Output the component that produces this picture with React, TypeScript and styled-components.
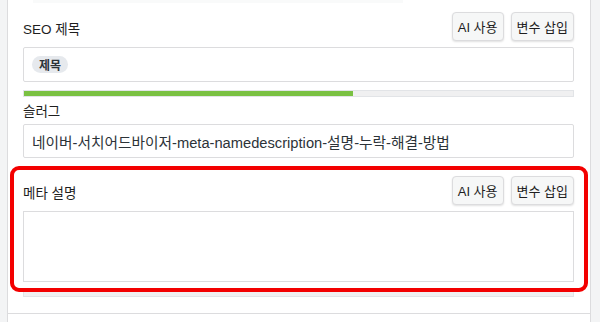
import { createGlobalStyle, styled } from "styled-components";

const GlobalStyle = createGlobalStyle`
  html, body {
    margin: 0;
    padding: 0;
    background: #f3f4f5;
    font-family: "Liberation Sans", "Noto Sans CJK KR", sans-serif;
    color: #1e1e1e;
  }
`;

const Page = styled.div`
  display: flex;
  height: 322px;
  padding-left: 7px;
  width: 584px;
  overflow: hidden;
`;

const Panel = styled.div`
  flex: 1;
  background: #fff;
  border-left: 1px solid #dcdcde;
  border-right: 1px solid #dcdcde;
  display: flex;
  flex-direction: column;
`;

const TopFade = styled.div`
  height: 3px;
  margin-left: 25px;
  width: 370px;
  background: #f9fafa;
`;

const Content = styled.div`
  padding: 9px 16px 0 15px;
  display: flex;
  flex-direction: column;
`;

const FieldHead = styled.div`
  display: flex;
  align-items: center;
  justify-content: space-between;
  height: 29px;
`;

const Label = styled.label<{ $pad?: string }>`
  font-size: 13.5px;
  line-height: 20px;
  color: #1e1e1e;
  padding: ${(p) => p.$pad ?? "0"};
`;

const Buttons = styled.div`
  display: flex;
  gap: 7px;
`;

const Button = styled.button`
  height: 29px;
  padding: 0 5px;
  font-family: inherit;
  font-size: 13px;
  color: #1e1e1e;
  background: #f6f7f7;
  border: 1px solid #dcdcde;
  border-radius: 4px;
  box-shadow: 0 1px 2px rgba(0, 0, 0, 0.12);
`;

const InputBox = styled.div<{ $h: number; $mt?: number }>`
  height: ${(p) => p.$h}px;
  margin-top: ${(p) => p.$mt ?? 6}px;
  border: 1px solid #dcdcde;
  border-radius: 2px;
  box-sizing: border-box;
  display: flex;
  align-items: center;
  padding: 0 8px;
  font-size: 14.7px;
  color: #2c3338;
  background: #fff;
  white-space: nowrap;
`;

const Chip = styled.span`
  display: inline-flex;
  align-items: center;
  height: 17px;
  padding: 0 7px;
  border-radius: 9px;
  background: #e6e9ed;
  font-size: 12px;
  font-weight: 600;
  color: #2c3338;
`;

const Progress = styled.div<{ $mt: number }>`
  height: 7px;
  margin-top: ${(p) => p.$mt}px;
  border: 1px solid #e2e4e7;
  box-sizing: border-box;
  background: #f0f0f1;
  overflow: hidden;
`;

const ProgressFill = styled.div`
  height: 100%;
  background: #7ac142;
`;

const Highlighted = styled.div`
  position: relative;
  margin-top: 8px;
  padding-top: 10px;
`;

const RedOutline = styled.div`
  position: absolute;
  top: 0;
  left: -13px;
  right: -14px;
  height: 126px;
  box-sizing: border-box;
  border: 4px solid #f30000;
  border-radius: 9px;
  pointer-events: none;
`;

const TextArea = styled.div`
  height: 71px;
  margin-top: 6px;
  border: 1px solid #dcdcde;
  box-sizing: border-box;
  background: #fff;
`;

const Separator = styled.div`
  margin-top: 16px;
  height: 1px;
  background: #dcdcde;
`;

export default function App() {
  return (
    <>
      <GlobalStyle />
      <Page>
        <Panel>
          <TopFade />
          <Content>
            <FieldHead>
              <Label $pad="6px 0 0">SEO 제목</Label>
              <Buttons>
                <Button>AI 사용</Button>
                <Button>변수 삽입</Button>
              </Buttons>
            </FieldHead>
            <InputBox $h={35}>
              <Chip>제목</Chip>
            </InputBox>
            <Progress $mt={8}>
              <ProgressFill style={{ width: "60%" }} />
            </Progress>
            <Label $pad="5px 0 0">슬러그</Label>
            <InputBox $h={34} $mt={2}>
              네이버-서치어드바이저-meta-namedescription-설명-누락-해결-방법
            </InputBox>
            <Highlighted>
              <FieldHead>
                <Label $pad="6px 0 0">메타 설명</Label>
                <Buttons>
                  <Button>AI 사용</Button>
                  <Button>변수 삽입</Button>
                </Buttons>
              </FieldHead>
              <TextArea />
              <Progress $mt={8} />
              <RedOutline />
            </Highlighted>
          </Content>
          <Separator />
        </Panel>
      </Page>
    </>
  );
}
